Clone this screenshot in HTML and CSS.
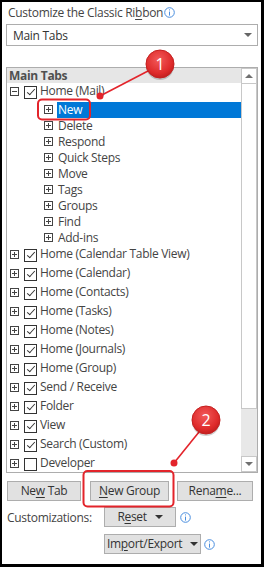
FILE: index.html
```html
<!DOCTYPE html>
<html lang="en">
<head>
    <meta charset="UTF-8">
    <title>Customize the Classic Ribbon</title>
    <link rel="stylesheet" href="styles.css">
</head>
<body>
<div class="frame">
    <div class="title">
        <span>Customize the Classic Ri<u>b</u>bon</span>
        <svg class="info" width="11" height="11" viewBox="0 0 11 11"><circle cx="5.5" cy="5.5" r="4.8" fill="none" stroke="#4a8ede"/><line x1="5.5" y1="4.6" x2="5.5" y2="8.6" stroke="#4a8ede"/><rect x="5" y="2.4" width="1" height="1" fill="#4a8ede"/></svg>
    </div>
    <div class="select">
        <span>Main Tabs</span>
        <span class="caret"></span>
    </div>

    <div class="listbox">
        <div class="tree">
            <div class="head">Main Tabs</div>
            <div class="row top"><span class="exp open"></span><span class="chk on"></span><span class="label">Home (Mail)</span></div>
            <div class="row sub sel"><span class="exp"></span><span class="label">New</span></div>
            <div class="row sub"><span class="exp"></span><span class="label">Delete</span></div>
            <div class="row sub"><span class="exp"></span><span class="label">Respond</span></div>
            <div class="row sub"><span class="exp"></span><span class="label">Quick Steps</span></div>
            <div class="row sub"><span class="exp"></span><span class="label">Move</span></div>
            <div class="row sub"><span class="exp"></span><span class="label">Tags</span></div>
            <div class="row sub"><span class="exp"></span><span class="label">Groups</span></div>
            <div class="row sub"><span class="exp"></span><span class="label">Find</span></div>
            <div class="row sub"><span class="exp"></span><span class="label">Add-ins</span></div>
            <div class="row top"><span class="exp"></span><span class="chk on"></span><span class="label">Home (Calendar Table View)</span></div>
            <div class="row top"><span class="exp"></span><span class="chk on"></span><span class="label">Home (Calendar)</span></div>
            <div class="row top"><span class="exp"></span><span class="chk on"></span><span class="label">Home (Contacts)</span></div>
            <div class="row top"><span class="exp"></span><span class="chk on"></span><span class="label">Home (Tasks)</span></div>
            <div class="row top"><span class="exp"></span><span class="chk on"></span><span class="label">Home (Notes)</span></div>
            <div class="row top"><span class="exp"></span><span class="chk on"></span><span class="label">Home (Journals)</span></div>
            <div class="row top"><span class="exp"></span><span class="chk on"></span><span class="label">Home (Group)</span></div>
            <div class="row top"><span class="exp"></span><span class="chk on"></span><span class="label">Send / Receive</span></div>
            <div class="row top"><span class="exp"></span><span class="chk on"></span><span class="label">Folder</span></div>
            <div class="row top"><span class="exp"></span><span class="chk on"></span><span class="label">View</span></div>
            <div class="row top"><span class="exp"></span><span class="chk on"></span><span class="label">Search (Custom)</span></div>
            <div class="row top"><span class="exp"></span><span class="chk"></span><span class="label">Developer</span></div>
        </div>
        <div class="scrollbar">
            <div class="sb-btn"><span class="arrow up"></span></div>
            <div class="sb-thumb"></div>
            <div class="sb-track"></div>
            <div class="sb-btn"><span class="arrow down"></span></div>
        </div>
    </div>

    <div class="btn-row">
        <button class="btn new-tab">Ne<u>w</u> Tab</button>
        <button class="btn new-group"><u>N</u>ew Group</button>
        <button class="btn rename">Rena<u>m</u>e...</button>
    </div>
    <div class="cust-row">
        <span class="cust-label">Customizations:</span>
        <button class="btn reset">R<u>e</u>set <span class="caret dark"></span></button>
        <svg class="info" width="11" height="11" viewBox="0 0 11 11"><circle cx="5.5" cy="5.5" r="4.8" fill="none" stroke="#4a8ede"/><line x1="5.5" y1="4.6" x2="5.5" y2="8.6" stroke="#4a8ede"/><rect x="5" y="2.4" width="1" height="1" fill="#4a8ede"/></svg>
    </div>
    <div class="cust-row second">
        <button class="btn import">Im<u>p</u>ort/Export <span class="caret dark"></span></button>
        <svg class="info" width="11" height="11" viewBox="0 0 11 11"><circle cx="5.5" cy="5.5" r="4.8" fill="none" stroke="#4a8ede"/><line x1="5.5" y1="4.6" x2="5.5" y2="8.6" stroke="#4a8ede"/><rect x="5" y="2.4" width="1" height="1" fill="#4a8ede"/></svg>
    </div>

    <!-- callouts drawn over the dialog -->
    <svg class="callouts" width="264" height="567" viewBox="0 0 264 567">
        <defs>
            <radialGradient id="badge" cx="0.45" cy="0.35" r="0.7">
                <stop offset="0" stop-color="#f25a5a"/>
                <stop offset="0.7" stop-color="#de2a2a"/>
                <stop offset="1" stop-color="#b81c1c"/>
            </radialGradient>
        </defs>
        <rect x="38" y="99.5" width="52" height="20" rx="4" fill="none" stroke="#e3242b" stroke-width="2"/>
        <line x1="148" y1="71" x2="100" y2="96" stroke="#e3242b" stroke-width="1.6"/>
        <circle cx="100" cy="96" r="3.5" fill="#e3242b"/>
        <circle cx="160" cy="66" r="14" fill="#000" opacity="0.18"/>
        <circle cx="160" cy="64" r="14" fill="url(#badge)" stroke="#c42020" stroke-width="1"/>
        <text x="160" y="70" class="badge-num">1</text>

        <rect x="83.5" y="471" width="90" height="35.5" rx="4" fill="none" stroke="#e3242b" stroke-width="2"/>
        <line x1="199" y1="432" x2="174" y2="463" stroke="#e3242b" stroke-width="1.6"/>
        <circle cx="174" cy="463" r="3.5" fill="#e3242b"/>
        <circle cx="206" cy="422" r="14" fill="#000" opacity="0.18"/>
        <circle cx="206" cy="420" r="14" fill="url(#badge)" stroke="#c42020" stroke-width="1"/>
        <text x="206" y="426" class="badge-num">2</text>
    </svg>
</div>
</body>
</html>
```

FILE: styles.css
```css
* { box-sizing: border-box; }
body { margin: 0; font-family: "Open Sans", Arial, sans-serif; font-size: 12px; letter-spacing: -0.3px; color: #444; }
.frame { position: relative; width: 264px; height: 567px; border: solid #000; border-width: 2px 3px 3px 2px; padding: 3px 3px 0 4px; background: #fff; }

.title { height: 16px; line-height: 16px; padding-left: 2px; display: flex; align-items: center; gap: 1px; }
.title .info { margin-top: -1px; }
u { text-decoration: underline; text-underline-offset: 2px; }

.select { margin-top: 3px; height: 22px; border: 1px solid #adadad; display: flex; align-items: center; justify-content: space-between; padding: 0 5px 0 6px; color: #333; }
.caret { width: 0; height: 0; border-left: 4px solid transparent; border-right: 4px solid transparent; border-top: 4px solid #666; }
.caret.dark { border-top-color: #333; display: inline-block; margin-left: 5px; vertical-align: 2px; }

.listbox { margin-top: 21px; height: 406px; border: 1px solid #adadad; display: flex; }
.tree { flex: 1; overflow: hidden; }
.head { height: 15px; line-height: 15px; background: #e6e6e6; font-weight: bold; padding-left: 2px; color: #505050; }
.row { display: flex; align-items: flex-start; height: 16px; white-space: nowrap; }
.row.top { height: 19px; padding-left: 3px; }
.row.sub { padding-left: 37px; }
.label { line-height: 16px; height: 16px; }
.row.top .label { margin-left: 3px; }
.row.sub .label { margin-left: 4px; padding-left: 1px; }
.row.sel .label { flex: 1; background: #0078d7; color: #fff; }

.exp { position: relative; flex: none; width: 9px; height: 9px; border: 1px solid #444; margin-top: 4px; }
.exp::before { content: ""; position: absolute; left: 1px; right: 1px; top: 3px; height: 1px; background: #444; }
.exp::after { content: ""; position: absolute; top: 1px; bottom: 1px; left: 3px; width: 1px; background: #444; }
.exp.open::after { display: none; }
.row.sub .exp { margin-top: 3px; }

.chk { position: relative; flex: none; width: 13px; height: 13px; border: 1px solid #333; margin: 3px 0 0 5px; }
.chk.on::after { content: ""; position: absolute; left: 2px; top: 2px; width: 7px; height: 3px; border-left: 1px solid #333; border-bottom: 1px solid #333; transform: rotate(-48deg); }

.scrollbar { width: 16px; display: flex; flex-direction: column; }
.sb-btn { height: 16px; border: 1px solid #c8c8c8; display: flex; align-items: center; justify-content: center; background: #fff; }
.sb-thumb { height: 325px; border-left: 1px solid #c8c8c8; border-right: 1px solid #c8c8c8; border-bottom: 1px solid #c8c8c8; }
.sb-track { flex: 1; background: #e8e8e8; }
.arrow { width: 0; height: 0; border-left: 4px solid transparent; border-right: 4px solid transparent; }
.arrow.up { border-bottom: 4px solid #707070; }
.arrow.down { border-top: 4px solid #707070; }

.btn { font-family: inherit; font-size: 12px; letter-spacing: -0.3px; color: #333; background: #e1e1e1; border: 1px solid #adadad; height: 20px; padding: 0; line-height: 18px; white-space: nowrap; }
.btn-row { margin-top: 8px; display: flex; padding-left: 1px; }
.new-tab { width: 74px; }
.new-group { width: 79px; margin-left: 9px; }
.rename { width: 76px; margin-left: 8px; }

.cust-row { margin-top: 6px; display: flex; align-items: center; padding-left: 1px; }
.cust-row.second { margin-top: 7px; padding-left: 98px; }
.cust-label { width: 97px; }
.reset { width: 72px; }
.import { width: 97px; }
.cust-row .info { margin-left: 4px; }
.cust-row.second .info { margin-left: 3px; }

.callouts { position: absolute; left: -2px; top: -2px; pointer-events: none; }
.badge-num { font-family: "Open Sans", Arial, sans-serif; font-size: 16px; letter-spacing: 0; fill: #fff; text-anchor: middle; }
```
